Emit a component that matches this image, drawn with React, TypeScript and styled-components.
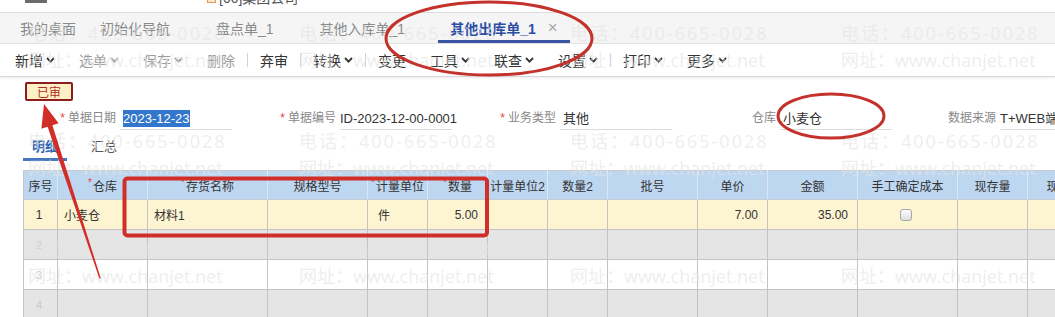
import React from "react";
import styled, { createGlobalStyle } from "styled-components";

type Column = {
  title: string;
  width: number;
  required?: boolean;
};

type Cell = {
  text?: string;
  align?: "left" | "right" | "center";
  check?: boolean;
  inset?: number;
};

const COLUMNS: Column[] = [
  { title: "序号", width: 34 },
  { title: "仓库", width: 90, required: true },
  { title: "存货名称", width: 120, required: true },
  { title: "规格型号", width: 100 },
  { title: "计量单位", width: 60, required: true },
  { title: "数量", width: 60, required: true },
  { title: "计量单位2", width: 60 },
  { title: "数量2", width: 60 },
  { title: "批号", width: 90 },
  { title: "单价", width: 70 },
  { title: "金额", width: 90 },
  { title: "手工确定成本", width: 100 },
  { title: "现存量", width: 70 },
  { title: "现存件数", width: 86 }
];

const FIRST_ROW: Cell[] = [
  { text: "1", align: "center" },
  { text: "小麦仓" },
  { text: "材料1" },
  {},
  { text: "件", inset: 10 },
  { text: "5.00", align: "right" },
  {},
  {},
  {},
  { text: "7.00", align: "right" },
  { text: "35.00", align: "right" },
  { check: true, align: "center" },
  {},
  {}
];

const TOOLS: (string | { label: string; menu?: boolean; disabled?: boolean })[] = [
  { label: "新增", menu: true },
  { label: "选单", menu: true, disabled: true },
  { label: "保存", menu: true, disabled: true },
  { label: "删除", disabled: true },
  "|",
  { label: "弃审" },
  "|",
  { label: "转换", menu: true },
  "|",
  { label: "变更" },
  { label: "工具", menu: true },
  { label: "联查", menu: true },
  { label: "设置", menu: true },
  "|",
  { label: "打印", menu: true },
  { label: "更多", menu: true }
];

const GlobalStyle = createGlobalStyle`
  html, body {
    margin: 0;
    padding: 0;
    background: #fff;
  }
  body {
    font-family: "Liberation Sans", "Noto Sans CJK SC", sans-serif;
    color: #333;
  }
`;

const Page = styled.div`
  position: relative;
  width: 1055px;
  height: 317px;
  overflow: hidden;
  background: #fff;
`;

const TopStrip = styled.div`
  height: 12px;
  border-bottom: 1px solid #dcdcdc;
  display: flex;
  align-items: flex-start;
  overflow: hidden;
`;

const LogoStub = styled.div`
  width: 22px;
  height: 3px;
  margin-left: 25px;
  background: #6b6b6b;
`;

const Company = styled.div`
  margin-left: 160px;
  margin-top: -10px;
  display: flex;
  align-items: center;
  gap: 3px;
  font-size: 14px;
  line-height: 16px;
  color: #555;
`;

const CompanyIcon = styled.span`
  width: 9px;
  height: 10px;
  box-sizing: border-box;
  border: 1px solid #e49a58;
  background: #fbe5cc;
`;

const TabBar = styled.div`
  height: 30px;
  background: #f5f5f5;
  display: flex;
  align-items: stretch;
  font-size: 14px;
`;

const Tab = styled.div<{ $active?: boolean }>`
  display: flex;
  align-items: center;
  gap: 12px;
  padding: ${p => (p.$active ? "0 12px" : "0 23px")};
  margin-left: ${p => (p.$active ? "10px" : "0")};
  color: ${p => (p.$active ? "#2b4ea4" : "#8a8a8a")};
  font-weight: ${p => (p.$active ? 700 : 400)};
  box-sizing: border-box;
  border-bottom: 3px solid ${p => (p.$active ? "#3d53a6" : "transparent")};
  padding-top: 3px;

  &:first-child {
    padding-left: 20px;
    padding-right: 12px;
  }
  &:nth-child(2) {
    padding-left: 12px;
  }
`;

const CloseMark = styled.span`
  color: #a8a8a8;
  font-weight: 400;
  font-size: 17px;
`;

const Toolbar = styled.div`
  position: relative;
  z-index: 1;
  height: 32px;
  background: #fff;
  border-top: 1px solid #e4e4e4;
  border-bottom: 1px solid #d6d6d6;
  box-shadow: 0 1px 3px rgba(0, 0, 0, 0.08);
  display: flex;
  align-items: center;
  padding-left: 3px;
  font-size: 14px;
`;

const ToolItem = styled.div<{ $disabled?: boolean }>`
  display: flex;
  align-items: center;
  gap: 3px;
  padding: 0 12px;
  color: ${p => (p.$disabled ? "#9b9b9b" : "#333")};
`;

const ToolSep = styled.span`
  width: 1px;
  height: 14px;
  background: #d2d2d2;
`;

const Content = styled.div`
  padding-top: 5px;
`;

const StatusBadge = styled.div`
  margin-left: 25px;
  width: 48px;
  height: 19px;
  box-sizing: border-box;
  border: 2px solid #8c1d1d;
  border-radius: 2px;
  background: #fdf0c4;
  color: #b42a22;
  font-size: 12px;
  display: flex;
  align-items: center;
  justify-content: center;
`;

const FormRow = styled.div`
  margin-top: 7px;
  padding-left: 16px;
  display: flex;
`;

const Field = styled.div`
  width: 220px;
  flex: none;
  display: flex;
`;

const FieldLabel = styled.div`
  width: 104px;
  box-sizing: border-box;
  padding-right: 4px;
  text-align: right;
  font-size: 12px;
  line-height: 21px;
  color: #888;
  white-space: nowrap;
`;

const Star = styled.span`
  color: #e3463c;
  margin-right: 3px;
`;

const FieldValue = styled.div<{ $tight?: boolean }>`
  width: 112px;
  height: 22px;
  box-sizing: border-box;
  border-bottom: 1px solid #dcdcdc;
  padding-left: ${p => (p.$tight ? 0 : 3)}px;
  font-size: 13px;
  line-height: 21px;
  color: #333;
  white-space: nowrap;
`;

const Selected = styled.span`
  background: #3377cc;
  color: #fff;
  padding: 1px 0;
`;

const DetailTabs = styled.div`
  margin-top: 5px;
  padding-left: 23px;
  display: flex;
  gap: 15px;
  height: 26px;
`;

const DetailTab = styled.div<{ $active?: boolean }>`
  padding: 0 9px;
  box-sizing: border-box;
  height: 26px;
  line-height: 23px;
  font-size: 13px;
  color: ${p => (p.$active ? "#2d64b0" : "#555")};
  font-weight: ${p => (p.$active ? 700 : 400)};
  border-bottom: 3px solid ${p => (p.$active ? "#4676c0" : "transparent")};
`;

const Grid = styled.table`
  margin: 9px 0 0 23px;
  border-collapse: collapse;
  table-layout: fixed;
  width: 1064px;
  font-size: 12px;
`;

const HeadCell = styled.th`
  height: 28px;
  padding: 0;
  background: #bed7f1;
  border: 1px solid #c4ccd6;
  border-top-color: #c8c8c8;
  border-left-color: #dde8f4;
  border-right-color: #dde8f4;
  font-weight: 400;
  color: #333;
  text-align: center;
  white-space: nowrap;
  &:first-child {
    border-left-color: #c4c4c4;
  }
`;

const HeadStar = styled.span`
  color: #e0443a;
  font-size: 10px;
  vertical-align: top;
  margin-right: 1px;
`;

const Row = styled.tr<{ $tone: "yellow" | "gray" | "white" }>`
  height: 30px;
  background: ${p =>
    p.$tone === "yellow" ? "#fdf4d2" : p.$tone === "gray" ? "#e5e5e5" : "#fff"};
`;

const BodyCell = styled.td<{ $align?: string; $inset?: number }>`
  padding: 0 9px 0 ${p => p.$inset ?? 6}px;
  border: 1px solid #c3c3c3;
  text-align: ${p => p.$align ?? "left"};
  color: #333;
  white-space: nowrap;
  overflow: hidden;
`;

const FaintNo = styled.span`
  color: #c9c9c9;
  font-size: 11px;
`;

const CheckBox = styled.span`
  display: inline-block;
  width: 12px;
  height: 12px;
  box-sizing: border-box;
  border: 1px solid #a7a7a7;
  border-radius: 3px;
  background: linear-gradient(#fdfdfd, #dedede);
  vertical-align: middle;
`;

const Watermark = styled.div`
  position: absolute;
  inset: 0;
  z-index: 2;
  pointer-events: none;
  padding: 20px 0 0 28px;
  display: grid;
  grid-template-columns: repeat(4, 271px);
  grid-auto-rows: 108px;
`;

const WmLine = styled.div<{ $spaced?: boolean }>`
  font-family: "Open Sans", "Noto Sans CJK SC", sans-serif;
  font-size: 18px;
  line-height: 27px;
  height: 27px;
  letter-spacing: ${p => (p.$spaced ? "2px" : "0")};
  color: rgba(228, 228, 228, 0.62);
  white-space: nowrap;
`;

const Marks = styled.svg`
  position: absolute;
  left: 0;
  top: 0;
  z-index: 3;
  pointer-events: none;
`;

const Chevron = () => (
  <svg width="9" height="6" viewBox="0 0 9 6">
    <polyline
      points="1,1 4.5,4.6 8,1"
      fill="none"
      stroke="currentColor"
      strokeWidth="1.8"
    />
  </svg>
);

const App: React.FC = () => {
  return (
    <Page>
      <GlobalStyle />
      <TopStrip>
        <LogoStub />
        <Company>
          <CompanyIcon />
          <span>[00]集团公司</span>
        </Company>
      </TopStrip>

      <TabBar>
        <Tab>我的桌面</Tab>
        <Tab>初始化导航</Tab>
        <Tab>盘点单_1</Tab>
        <Tab>其他入库单_1</Tab>
        <Tab $active>
          其他出库单_1
          <CloseMark>×</CloseMark>
        </Tab>
      </TabBar>

      <Toolbar>
        {TOOLS.map((t, i) =>
          typeof t === "string" ? (
            <ToolSep key={i} />
          ) : (
            <ToolItem key={i} $disabled={t.disabled}>
              {t.label}
              {t.menu && <Chevron />}
            </ToolItem>
          )
        )}
      </Toolbar>

      <Content>
        <StatusBadge>已审</StatusBadge>

        <FormRow>
          <Field>
            <FieldLabel>
              <Star>*</Star>单据日期
            </FieldLabel>
            <FieldValue>
              <Selected>2023-12-23</Selected>
            </FieldValue>
          </Field>
          <Field>
            <FieldLabel>
              <Star>*</Star>单据编号
            </FieldLabel>
            <FieldValue $tight>ID-2023-12-00-0001</FieldValue>
          </Field>
          <Field>
            <FieldLabel>
              <Star>*</Star>业务类型
            </FieldLabel>
            <FieldValue>其他</FieldValue>
          </Field>
          <Field>
            <FieldLabel>仓库</FieldLabel>
            <FieldValue>小麦仓</FieldValue>
          </Field>
          <Field>
            <FieldLabel>数据来源</FieldLabel>
            <FieldValue $tight>T+WEB端</FieldValue>
          </Field>
        </FormRow>

        <DetailTabs>
          <DetailTab $active>明细</DetailTab>
          <DetailTab>汇总</DetailTab>
        </DetailTabs>

        <Grid>
          <colgroup>
            {COLUMNS.map(c => (
              <col key={c.title} style={{ width: c.width }} />
            ))}
          </colgroup>
          <thead>
            <tr>
              {COLUMNS.map(c => (
                <HeadCell key={c.title}>
                  {c.required && <HeadStar>*</HeadStar>}
                  {c.title}
                </HeadCell>
              ))}
            </tr>
          </thead>
          <tbody>
            <Row $tone="yellow">
              {FIRST_ROW.map((cell, i) => (
                <BodyCell key={i} $align={cell.align} $inset={cell.inset}>
                  {cell.check ? <CheckBox /> : cell.text}
                </BodyCell>
              ))}
            </Row>
            {(["gray", "white", "gray"] as const).map((tone, r) => (
              <Row key={r} $tone={tone}>
                {COLUMNS.map((c, i) => (
                  <BodyCell key={c.title} $align={i === 0 ? "center" : "left"}>
                    {i === 0 && <FaintNo>{r + 2}</FaintNo>}
                  </BodyCell>
                ))}
              </Row>
            ))}
          </tbody>
        </Grid>
      </Content>

      <Watermark>
        {Array.from({ length: 12 }).map((_, i) => (
          <div key={i}>
            <WmLine $spaced>电话：400-665-0028</WmLine>
            <WmLine>网址：www.chanjet.net</WmLine>
          </div>
        ))}
      </Watermark>

      <Marks width="1055" height="317" viewBox="0 0 1055 317">
        <ellipse
          cx="489"
          cy="38.5"
          rx="103"
          ry="36.5"
          fill="none"
          stroke="#c4322c"
          strokeWidth="3"
        />
        <ellipse
          cx="831"
          cy="116"
          rx="53"
          ry="22"
          fill="none"
          stroke="#c4322c"
          strokeWidth="3"
        />
        <rect
          x="124.5"
          y="178.5"
          width="362.5"
          height="57"
          rx="3"
          fill="none"
          stroke="#d22e28"
          strokeWidth="4"
        />
        <polygon
          points="44,104 58.6,123.3 52.4,125.3 100.8,278.2 99.4,278.6 47.6,126.7 41.4,128.7"
          fill="#d22e28"
        />
      </Marks>
    </Page>
  );
};

export default App;
